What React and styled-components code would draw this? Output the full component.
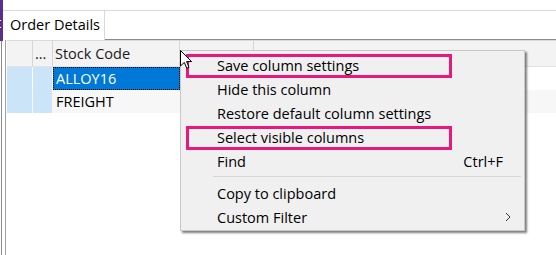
import styled, { createGlobalStyle } from "styled-components";

const GlobalStyle = createGlobalStyle`
  html, body {
    margin: 0;
    padding: 0;
    background: #ffffff;
  }
  body {
    font-family: "Open Sans", "Noto Sans", sans-serif;
    font-size: 14px;
    color: #000;
  }
`;

const columns = [
  { key: "sel", width: 26 },
  { key: "dots", width: 20, label: "..." },
  { key: "code", width: 127, label: "Stock Code" },
  { key: "next", width: 74 },
];

const rows = [
  { code: "ALLOY16", selected: true },
  { code: "FREIGHT", alt: true },
];

const menuItems = [
  { label: "Save column settings", marked: true },
  { label: "Hide this column" },
  { label: "Restore default column settings" },
  { label: "Select visible columns", marked: true },
  { label: "Find", shortcut: "Ctrl+F" },
  { separator: true },
  { label: "Copy to clipboard" },
  { label: "Custom Filter", submenu: true },
];

const App = () => {
  return (
    <>
      <GlobalStyle />
      <Page>
        <LeftEdge>
          <PurpleTab>t</PurpleTab>
          <EdgeRest />
        </LeftEdge>
        <Main>
          <TopRule />
          <TabRow>
            <Tab>Order Details</Tab>
            <TabFill />
          </TabRow>
          <Panel>
            <Grid>
              <HeaderRow>
                {columns.map((c) => (
                  <HeaderCell key={c.key} $w={c.width}>
                    {c.label}
                  </HeaderCell>
                ))}
                <HeaderFill />
              </HeaderRow>
              {rows.map((r) => (
                <Row key={r.code} $alt={r.alt}>
                  <Selector $w={26} />
                  <Selector $w={20} />
                  <CodeCell $selected={r.selected}>{r.code}</CodeCell>
                </Row>
              ))}
            </Grid>
          </Panel>
        </Main>

        <Menu>
          {menuItems.map((m, i) =>
            m.separator ? (
              <Separator key={i} />
            ) : (
              <MenuItem key={i} $marked={m.marked}>
                <span>{m.label}</span>
                {m.shortcut && <Shortcut>{m.shortcut}</Shortcut>}
                {m.submenu && (
                  <Chevron width="6" height="10" viewBox="0 0 6 10">
                    <path d="M1 1 L5 5 L1 9" fill="none" stroke="#333" strokeWidth="1" />
                  </Chevron>
                )}
              </MenuItem>
            )
          )}
        </Menu>

        <Cursor width="13" height="20" viewBox="0 0 13 20">
          <path
            d="M0.5 0.5 L0.5 16 L4.3 12.4 L6.8 18.3 L9 17.3 L6.6 11.6 L11.6 11.6 Z"
            fill="#fff"
            stroke="#000"
            strokeWidth="1"
            strokeLinejoin="miter"
          />
        </Cursor>
      </Page>
    </>
  );
};

export default App;

const Page = styled.div`
  position: relative;
  width: 556px;
  height: 255px;
  overflow: hidden;
  display: flex;
  background: #fff;
`;

const LeftEdge = styled.div`
  width: 3px;
  display: flex;
  flex-direction: column;
`;

const PurpleTab = styled.div`
  height: 41px;
  background: #5c2d91;
  color: #fff;
  font-size: 15px;
  line-height: 44px;
  text-indent: -4px;
  overflow: hidden;
`;

const EdgeRest = styled.div`
  flex: 1;
  border-right: 1px solid #8a8a8a;
  width: 1px;
`;

const Main = styled.div`
  flex: 1;
  display: flex;
  flex-direction: column;
`;

const TopRule = styled.div`
  height: 10px;
  border-bottom: 1px solid #d9d9d9;
`;

const TabRow = styled.div`
  display: flex;
  height: 29px;
`;

const Tab = styled.div`
  width: 94px;
  padding-left: 7px;
  border-right: 1px solid #d9d9d9;
  font-size: 14.5px;
  line-height: 28px;
  color: #000;
  white-space: nowrap;
`;

const TabFill = styled.div`
  flex: 1;
  border-bottom: 1px solid #8c8c8c;
`;

const Panel = styled.div`
  flex: 1;
  padding-left: 2px;
`;

const Grid = styled.div`
  height: 100%;
  border-left: 1px solid #a0a0a0;
  padding-left: 1px;
`;

const HeaderRow = styled.div`
  display: flex;
  height: 25px;
  background: #f3f3f3;
  border-top: 1px solid #dadada;
  border-bottom: 1px solid #e2e2e2;
`;

const HeaderCell = styled.div`
  width: ${(p) => p.$w}px;
  border-right: 1px solid #d5d5d5;
  padding-left: 2px;
  box-sizing: border-box;
  font-size: 14.5px;
  line-height: 25px;
  color: #1a1a1a;
  white-space: nowrap;
`;

const HeaderFill = styled.div`
  flex: 1;
`;

const Row = styled.div`
  display: flex;
  height: 23px;
  background: ${(p) => (p.$alt ? "#f7f7f7" : "#fff")};
`;

const Selector = styled.div`
  width: ${(p) => p.$w - 1}px;
  margin-right: 1px;
  background: #cce4f7;
`;

const CodeCell = styled.div`
  width: 127px;
  box-sizing: border-box;
  padding-left: 2px;
  font-size: 14.5px;
  line-height: 21px;
  white-space: nowrap;
  border: 1px ${(p) => (p.$selected ? "dotted #000" : "solid transparent")};
  background: ${(p) => (p.$selected ? "#0078d7" : "transparent")};
  color: ${(p) => (p.$selected ? "#fff" : "#000")};
`;

const Menu = styled.div`
  position: absolute;
  left: 180px;
  top: 50px;
  width: 343px;
  padding: 3px 0 0;
  height: 176px;
  background: #f0f0f0;
  border: 1px solid #c8c8c8;
  box-shadow: 2px 2px 2px rgba(0, 0, 0, 0.5);
`;

const MenuItem = styled.div`
  position: relative;
  display: flex;
  align-items: center;
  height: 24px;
  box-sizing: border-box;
  padding: 0 21px 2px 36px;
  font-size: 14.5px;
  color: #000;
  white-space: nowrap;

  &::after {
    content: "";
    display: ${(p) => (p.$marked ? "block" : "none")};
    position: absolute;
    left: 5px;
    top: 0;
    width: 266px;
    height: 24px;
    box-sizing: border-box;
    border: 3px solid #e8197a;
  }
`;

const Shortcut = styled.span`
  margin-left: auto;
`;

const Chevron = styled.svg`
  margin-left: auto;
  margin-right: -8px;
`;

const Separator = styled.div`
  height: 1px;
  margin: 2px 3px 5px 32px;
  background: #d7d7d7;
`;

const Cursor = styled.svg`
  position: absolute;
  left: 180px;
  top: 50px;
`;
